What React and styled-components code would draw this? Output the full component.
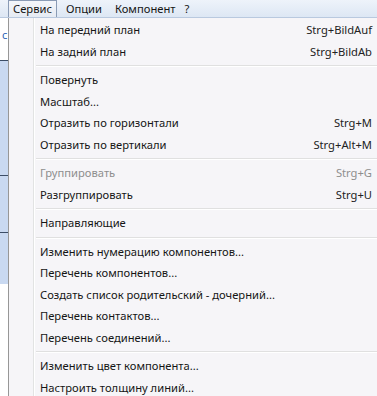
import styled, { createGlobalStyle } from 'styled-components';

const GlobalStyle = createGlobalStyle`
  html, body {
    margin: 0;
    padding: 0;
    background: #ffffff;
    overflow: hidden;
  }
  body {
    font-family: "Noto Sans", "Open Sans", sans-serif;
    font-size: 11.2px;
    color: #151515;
  }
`;

const Page = styled.div`
  width: 377px;
  height: 396px;
  display: flex;
  flex-direction: column;
  overflow: hidden;
`;

const MenuBar = styled.div`
  height: 17px;
  flex: none;
  display: flex;
  align-items: stretch;
  padding-left: 8px;
  background: linear-gradient(#eef3fa, #dde7f4);
  border-bottom: 1px solid #b9c9df;
`;

const BarItem = styled.div`
  display: flex;
  align-items: center;
  padding: 0 ${p => p.$right ?? 4}px 1px ${p => p.$left ?? 4}px;
  color: #151515;
  border: 1px solid ${p => (p.$open ? '#8a9bb5' : 'transparent')};
  border-bottom: none;
  background: ${p => (p.$open ? 'linear-gradient(#f4f6fa, #e6ebf3)' : 'transparent')};
  line-height: 1;
`;

const Body = styled.div`
  flex: 1;
  display: flex;
  min-height: 0;
`;

const Behind = styled.div`
  width: 8px;
  flex: none;
  display: flex;
  flex-direction: column;
  overflow: hidden;
`;

const Patch = styled.div`
  height: ${p => p.$h}px;
  flex: none;
  background: ${p => p.$bg};
  border-bottom: ${p => (p.$line ? '1px solid #3c4d66' : 'none')};
  color: #2c5fb3;
  font-size: 11px;
  line-height: ${p => p.$h}px;
  padding-left: 2px;
  overflow: hidden;
`;

const Menu = styled.div`
  width: 379px;
  flex: none;
  background: #f6f5f8;
  border-left: 1px solid #979797;
  padding-top: 1px;
  position: relative;
  &::before {
    content: '';
    position: absolute;
    top: 0;
    bottom: 0;
    left: 24px;
    width: 1px;
    background: #e2e3e3;
    box-shadow: 1px 0 0 #ffffff;
  }
`;

const Item = styled.div`
  height: 21.5px;
  display: flex;
  align-items: center;
  padding-left: 31px;
  padding-right: 16px;
  color: ${p => (p.$disabled ? '#8e8e8e' : '#151515')};
  white-space: nowrap;
  position: relative;
`;

const Label = styled.span`
  flex: 1;
`;

const Shortcut = styled.span`
  color: ${p => (p.$disabled ? '#8e8e8e' : '#222222')};
`;

const Arrow = styled.span`
  width: 0;
  height: 0;
  border-top: 4px solid transparent;
  border-bottom: 4px solid transparent;
  border-left: 4px solid #555555;
  margin-left: auto;
  margin-right: -12px;
`;

const Separator = styled.div`
  height: 7px;
  display: flex;
  align-items: center;
  padding-left: 27px;
  &::after {
    content: '';
    flex: 1;
    height: 1px;
    background: #e0e0e0;
    box-shadow: 0 1px 0 #ffffff;
  }
`;

const groups = [
  [
    { label: 'На передний план', key: 'Strg+BildAuf' },
    { label: 'На задний план', key: 'Strg+BildAb' },
  ],
  [
    { label: 'Повернуть' },
    { label: 'Масштаб...' },
    { label: 'Отразить по горизонтали', key: 'Strg+M' },
    { label: 'Отразить по вертикали', key: 'Strg+Alt+M' },
  ],
  [
    { label: 'Группировать', key: 'Strg+G', disabled: true },
    { label: 'Разгруппировать', key: 'Strg+U' },
  ],
  [{ label: 'Направляющие', sub: true }],
  [
    { label: 'Изменить нумерацию компонентов...' },
    { label: 'Перечень компонентов...' },
    { label: 'Создать список родительский - дочерний...' },
    { label: 'Перечень контактов...' },
    { label: 'Перечень соединений...' },
  ],
  [
    { label: 'Изменить цвет компонента...' },
    { label: 'Настроить толщину линий...' },
  ],
];

export default function App() {
  return (
    <Page>
      <GlobalStyle />
      <MenuBar>
        <BarItem $open $left={4} $right={4}>Сервис</BarItem>
        <BarItem $left={8} $right={4}>Опции</BarItem>
        <BarItem $left={7} $right={3}>Компонент</BarItem>
        <BarItem $left={4} $right={4}>?</BarItem>
      </MenuBar>
      <Body>
        <Behind>
          <Patch $h={10} $bg="#ffffff" />
          <Patch $h={14} $bg="#ffffff">c</Patch>
          <Patch $h={18} $bg="#ffffff" $line />
          <Patch $h={114} $bg="#c9d9f1" $line />
          <Patch $h={56} $bg="#c9d9f1" $line />
          <Patch $h={51} $bg="#c9d9f1" />
          <Patch $h={120} $bg="#ffffff" />
        </Behind>
        <Menu>
          {groups.map((group, gi) => (
            <div key={gi}>
              {gi > 0 && <Separator />}
              {group.map(it => (
                <Item key={it.label} $disabled={it.disabled}>
                  <Label>{it.label}</Label>
                  {it.key && <Shortcut $disabled={it.disabled}>{it.key}</Shortcut>}
                  {it.sub && <Arrow />}
                </Item>
              ))}
            </div>
          ))}
        </Menu>
      </Body>
    </Page>
  );
}
